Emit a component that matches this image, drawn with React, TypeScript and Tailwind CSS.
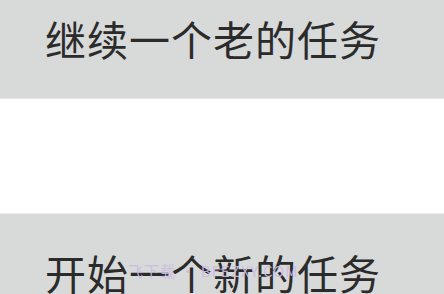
import React from "react"

const font = { fontFamily: '"Noto Sans CJK SC", "Noto Sans", sans-serif' }

export default function App() {
  return (
    <div className="relative flex h-[294px] w-[444px] flex-col overflow-hidden bg-white" style={font}>
      <button className="flex h-[99px] w-full shrink-0 items-start border-b border-[#e6e6e6] bg-[#d8d9d9] pl-[45px] pt-[10px] text-left">
        <span className="text-[41px] leading-[56px] tracking-[1px] text-[#2b2b2b]">继续一个老的任务</span>
      </button>
      <div className="h-[115px] shrink-0 border-b border-[#ececec] bg-white" />
      <button className="relative flex min-h-0 flex-1 items-start overflow-hidden bg-[#d8d9d9] pl-[45px] pt-[30px] text-left">
        <span className="shrink-0 text-[41px] leading-[56px] tracking-[1px] text-[#2b2b2b]">开始一个新的任务</span>
        <span className="absolute left-[128px] top-[46px] text-[15px] tracking-[1px] text-[#cbbde6] opacity-90">飞下载 • BFEZXY.COM</span>
      </button>
    </div>
  )
}
